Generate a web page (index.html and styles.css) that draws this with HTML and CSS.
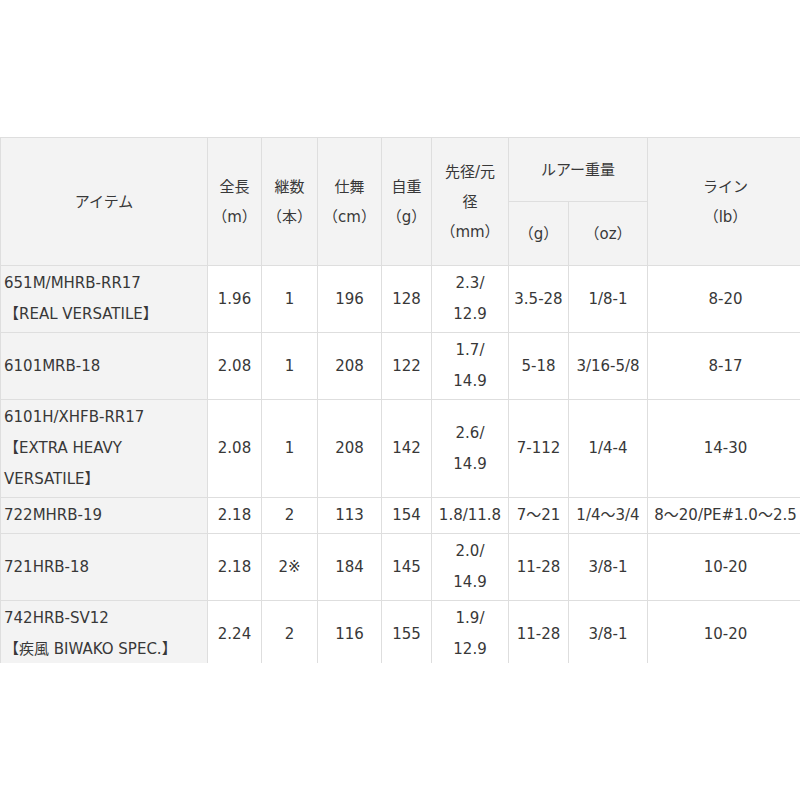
FILE: index.html
```html
<!DOCTYPE html>
<html lang="ja">
<head>
<meta charset="utf-8">
<title>スペック表</title>
<link rel="stylesheet" href="styles.css">
</head>
<body>
<div class="page">
  <div class="clip">
    <table class="spec">
      <colgroup>
        <col class="c-item">
        <col class="c-len">
        <col class="c-pcs">
        <col class="c-close">
        <col class="c-wt">
        <col class="c-dia">
        <col class="c-lg">
        <col class="c-loz">
        <col class="c-line">
      </colgroup>
      <thead>
        <tr class="h1">
          <th rowspan="2">アイテム</th>
          <th rowspan="2">全長<br>（m）</th>
          <th rowspan="2">継数<br>（本）</th>
          <th rowspan="2">仕舞<br>（cm）</th>
          <th rowspan="2">自重<br>（g）</th>
          <th rowspan="2">先径/元<br>径<br>（mm）</th>
          <th colspan="2">ルアー重量</th>
          <th rowspan="2">ライン<br>（lb）</th>
        </tr>
        <tr class="h2">
          <th>（g）</th>
          <th>（oz）</th>
        </tr>
      </thead>
      <tbody>
        <tr>
          <td class="item">651M/MHRB-RR17<br>【REAL VERSATILE】</td>
          <td>1.96</td><td>1</td><td>196</td><td>128</td>
          <td>2.3/<br>12.9</td><td>3.5-28</td><td>1/8-1</td><td>8-20</td>
        </tr>
        <tr>
          <td class="item">6101MRB-18</td>
          <td>2.08</td><td>1</td><td>208</td><td>122</td>
          <td>1.7/<br>14.9</td><td>5-18</td><td>3/16-5/8</td><td>8-17</td>
        </tr>
        <tr>
          <td class="item">6101H/XHFB-RR17<br>【EXTRA HEAVY VERSATILE】</td>
          <td>2.08</td><td>1</td><td>208</td><td>142</td>
          <td>2.6/<br>14.9</td><td>7-112</td><td>1/4-4</td><td>14-30</td>
        </tr>
        <tr>
          <td class="item">722MHRB-19</td>
          <td>2.18</td><td>2</td><td>113</td><td>154</td>
          <td>1.8/11.8</td><td>7～21</td><td>1/4～3/4</td><td>8～20/PE#1.0～2.5</td>
        </tr>
        <tr>
          <td class="item">721HRB-18</td>
          <td>2.18</td><td>2※</td><td>184</td><td>145</td>
          <td>2.0/<br>14.9</td><td>11-28</td><td>3/8-1</td><td>10-20</td>
        </tr>
        <tr>
          <td class="item">742HRB-SV12<br>【疾風 BIWAKO SPEC.】</td>
          <td>2.24</td><td>2</td><td>116</td><td>155</td>
          <td>1.9/<br>12.9</td><td>11-28</td><td>3/8-1</td><td>10-20</td>
        </tr>
      </tbody>
    </table>
  </div>
</div>
</body>
</html>
```

FILE: styles.css
```css
html, body {
  margin: 0;
  padding: 0;
  background: #ffffff;
  overflow: hidden;
}

.page {
  padding-top: 137px;
  width: 800px;
}

.clip {
  height: 526px;
  overflow: hidden;
  width: 803px;
}

.spec {
  border-collapse: collapse;
  table-layout: fixed;
  width: 803px;
  font-family: "DejaVu Sans", "Noto Sans CJK JP", sans-serif;
  font-size: 15px;
  line-height: 31px;
  color: #383838;
}

.c-item { width: 207px; }
.c-len { width: 54px; }
.c-pcs { width: 56px; }
.c-close { width: 64px; }
.c-wt { width: 50px; }
.c-dia { width: 77px; }
.c-lg { width: 60px; }
.c-loz { width: 79px; }
.c-line { width: 156px; }

.spec th,
.spec td {
  border: 1px solid #dedede;
  padding: 2px 3px;
  text-align: center;
  vertical-align: middle;
  font-weight: normal;
  white-space: normal;
}

.spec th {
  background: #f3f3f3;
  line-height: 30px;
}

.spec thead tr.h1 th { height: 59px; }
.spec thead tr.h2 th { height: 59px; }

.spec td.item {
  background: #f3f3f3;
  text-align: left;
}

.spec td {
  background: #ffffff;
}
```
